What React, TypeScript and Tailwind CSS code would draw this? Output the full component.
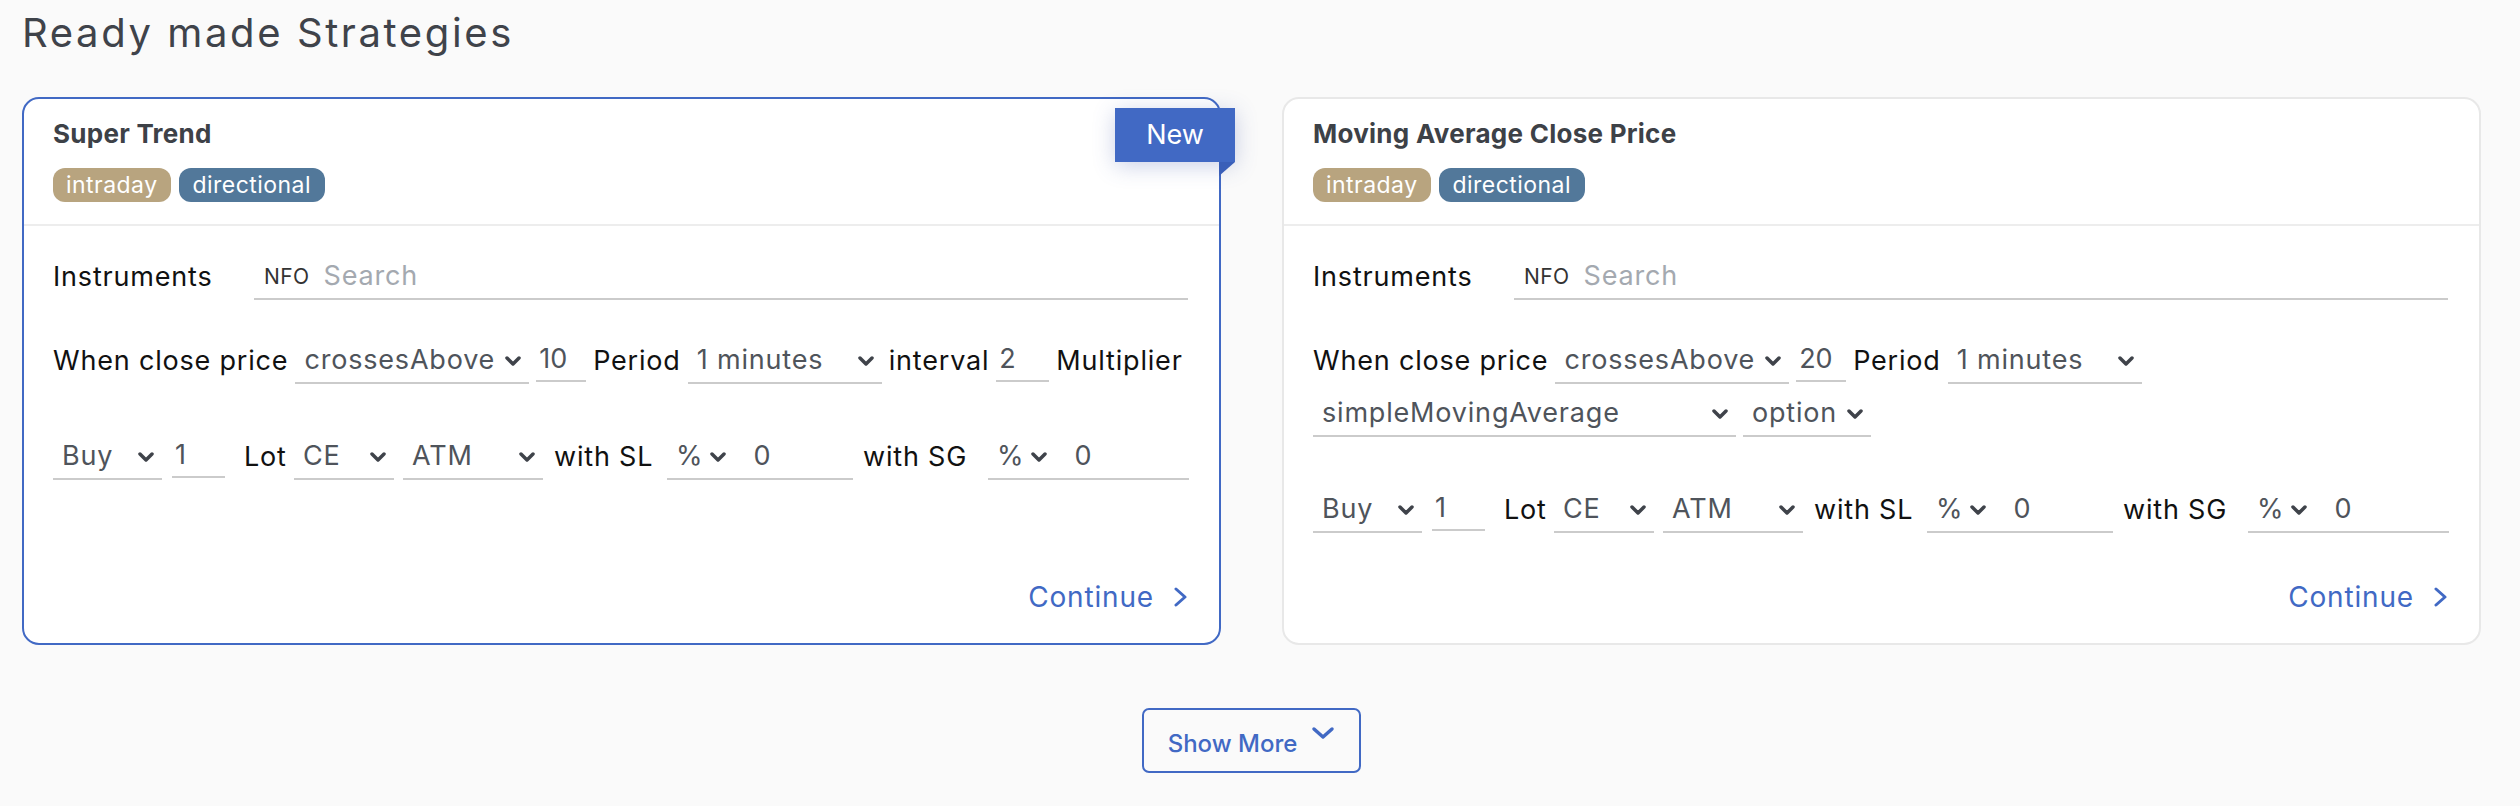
import { ReactNode } from 'react';

const FONT = { fontFamily: 'Inter, "Noto Sans", sans-serif' };

function SelectChevron() {
  return (
    <svg width="16" height="10" viewBox="0 0 16 10" className="shrink-0">
      <path d="M2 2 L8 8 L14 2" fill="none" stroke="#3f434a" strokeWidth="3.5" strokeLinecap="round" strokeLinejoin="round" />
    </svg>
  );
}

function Label({ children, className = '' }: { children: ReactNode; className?: string }) {
  return (
    <span className={`flex h-[45px] shrink-0 items-center whitespace-nowrap text-[27px] tracking-[0.03em] text-[#111] ${className}`}>
      {children}
    </span>
  );
}

function Select({ value, className = '' }: { value: string; className?: string }) {
  return (
    <div className={`flex h-[45px] shrink-0 items-center justify-between gap-[10px] border-b-2 border-[#cbcbcb] pl-[9px] pr-[8px] text-[27px] tracking-[0.03em] text-[#4f545b] ${className}`}>
      <span className="whitespace-nowrap">{value}</span>
      <SelectChevron />
    </div>
  );
}

function Input({ value, className = '' }: { value: string; className?: string }) {
  return (
    <div className={`mb-[2px] flex h-[43px] shrink-0 items-center border-b-2 border-[#cbcbcb] pl-[3px] text-[27px] text-[#4f545b] ${className}`}>
      {value}
    </div>
  );
}

function PercentGroup({ className = '' }: { className?: string }) {
  return (
    <div className={`flex h-[45px] shrink-0 items-center border-b-2 border-[#cbcbcb] pl-[9px] text-[27px] text-[#4f545b] ${className}`}>
      <span>%</span>
      <span className="ml-[7px]">
        <SelectChevron />
      </span>
      <span className="ml-[28px]">0</span>
    </div>
  );
}

function Tags() {
  return (
    <div className="mt-[19px] flex gap-[8px]">
      <span className="flex h-[34px] items-center rounded-[12px] bg-[#b8a47f] px-[13px] text-[23px] tracking-[0.02em] text-white">intraday</span>
      <span className="flex h-[34px] items-center rounded-[12px] bg-[#52789a] px-[14px] text-[23px] tracking-[0.02em] text-white">directional</span>
    </div>
  );
}

function Continue() {
  return (
    <div className="mt-auto flex justify-end pt-[44px]">
      <button className="flex h-[40px] items-center text-[28px] tracking-[0.03em] text-[#4169c4]">
        Continue
        <svg width="14" height="20" viewBox="0 0 14 20" className="ml-[20px]">
          <path d="M2 2 L11 10 L2 18" fill="none" stroke="#4169c4" strokeWidth="3" strokeLinecap="round" strokeLinejoin="round" />
        </svg>
      </button>
    </div>
  );
}

function InstrumentsRow() {
  return (
    <div className="flex items-end">
      <Label className="w-[201px]">Instruments</Label>
      <div className="flex h-[45px] flex-1 items-center border-b-2 border-[#cbcbcb] pl-[10px]">
        <span className="text-[21px] tracking-[0.02em] text-[#333]">NFO</span>
        <span className="ml-[14px] text-[27px] tracking-[0.03em] text-[#a4a9b0]">Search</span>
      </div>
    </div>
  );
}

function OrderRow() {
  return (
    <div className="mt-[51px] flex items-end">
      <Select value="Buy" className="w-[109px]" />
      <Input value="1" className="ml-[10px] w-[53px]" />
      <Label className="ml-[19px] w-[37px]">Lot</Label>
      <Select value="CE" className="ml-[13px] w-[100px]" />
      <Select value="ATM" className="ml-[9px] w-[140px]" />
      <Label className="ml-[11px] w-[98px]">with SL</Label>
      <PercentGroup className="ml-[15px] w-[186px]" />
      <Label className="ml-[10px] w-[103px]">with SG</Label>
      <PercentGroup className="ml-[22px] w-[201px]" />
    </div>
  );
}

function Card({ title, isNew, children }: { title: string; isNew?: boolean; children: ReactNode }) {
  return (
    <div className={`relative flex flex-col rounded-[17px] border-2 bg-white ${isNew ? 'border-[#4169c4]' : 'border-[#e8e8e8]'}`}>
      {isNew && (
        <div className="absolute right-[-16px] top-[9px]">
          <div className="flex h-[54px] w-[120px] items-center justify-center bg-[#4169c4] text-[27px] text-white shadow-[0_4px_22px_rgba(70,90,170,0.28)]">
            New
          </div>
          <svg width="16" height="14" viewBox="0 0 16 14" className="absolute right-0 top-[54px]">
            <polygon points="0,0 16,0 0,14" fill="#3a5fb8" />
          </svg>
        </div>
      )}
      <div className="border-b-2 border-[#ededed] px-[29px] pb-[22px] pt-[20px]">
        <h3 className="text-[26px] font-bold leading-[30px] tracking-[0.01em] text-[#3d4147]">{title}</h3>
        <Tags />
      </div>
      <div className="flex flex-1 flex-col pb-[26px] pl-[29px] pr-[31px] pt-[29px]">
        <InstrumentsRow />
        {children}
        <OrderRow />
        <Continue />
      </div>
    </div>
  );
}

export default function App() {
  return (
    <div className="min-h-screen bg-[#fafafa] pl-[22px] pr-[39px]" style={FONT}>
      <h1 className="pt-[13px] text-[40px] font-normal leading-[40px] tracking-[0.065em] text-[#3f434a]">Ready made Strategies</h1>

      <div className="mt-[44px] grid grid-cols-2 gap-[61px]">
        <Card title="Super Trend" isNew>
          <div className="mt-[39px] flex flex-wrap items-end gap-x-[7px] gap-y-[8px]">
            <Label>When close price</Label>
            <Select value="crossesAbove" />
            <Input value="10" className="w-[50px]" />
            <Label>Period</Label>
            <Select value="1 minutes" className="w-[194px]" />
            <Label>interval</Label>
            <Input value="2" className="w-[53px]" />
            <Label>Multiplier</Label>
          </div>
        </Card>

        <Card title="Moving Average Close Price">
          <div className="mt-[39px] flex flex-wrap items-end gap-x-[7px] gap-y-[8px]">
            <Label>When close price</Label>
            <Select value="crossesAbove" />
            <Input value="20" className="w-[50px]" />
            <Label>Period</Label>
            <Select value="1 minutes" className="w-[194px]" />
            <Select value="simpleMovingAverage" className="w-[423px]" />
            <Select value="option" />
          </div>
        </Card>
      </div>

      <div className="mt-[63px] flex justify-center">
        <button className="flex h-[65px] w-[219px] items-start justify-center rounded-[7px] border-2 border-[#4169c4] pt-[16px] text-[24px] font-medium text-[#4169c4]">
          Show More
          <svg width="24" height="14" viewBox="0 0 24 14" className="ml-[14px]">
            <path d="M3 3 L12 11 L21 3" fill="none" stroke="#4169c4" strokeWidth="3.5" strokeLinecap="round" strokeLinejoin="round" />
          </svg>
        </button>
      </div>
    </div>
  );
}
